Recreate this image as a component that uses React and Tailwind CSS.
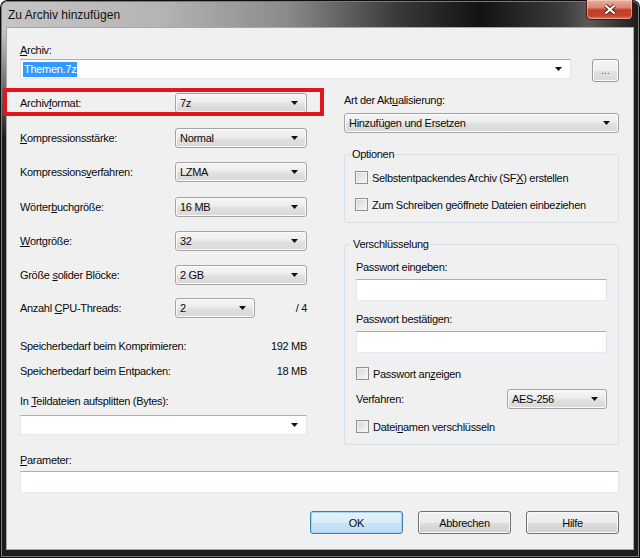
import React from "react";

function Arrow() {
  return (
    <svg width="7" height="4" viewBox="0 0 7 4" className="shrink-0">
      <path d="M0 0H7L3.5 4Z" fill="#111" />
    </svg>
  );
}

function Combo({ text, className = "" }) {
  return (
    <div
      className={
        "h-[20px] flex items-center rounded-[3px] border border-[#a4a4a4] bg-[linear-gradient(to_bottom,#f5f5f5_0%,#ececec_45%,#e0e0e0_55%,#d8d8d8_100%)] shadow-[inset_0_0_0_1px_#fbfbfb] pl-[4px] pr-[8px] " +
        className
      }
    >
      <span className="flex-1 whitespace-nowrap">{text}</span>
      <Arrow />
    </div>
  );
}

function Check({ children, className = "" }) {
  return (
    <div className={"flex items-center h-[13px] " + className}>
      <span className="w-[13px] h-[13px] shrink-0 border border-[#8e8f8f] bg-[linear-gradient(135deg,#d6d6d6_0%,#f8f8f8_100%)] shadow-[inset_0_0_0_1px_#f3f3f3]" />
      <span className="ml-[4px] whitespace-nowrap">{children}</span>
    </div>
  );
}

function TextBox({ className = "" }) {
  return (
    <div
      className={
        "h-[22px] bg-white border border-[#abadb3] border-l-[#e2e3ea] border-r-[#e2e3ea] border-b-[#e3e9ef] " +
        className
      }
    />
  );
}

function Row({ label, children, className = "" }) {
  return (
    <div className={"flex items-center h-[20px] " + className}>
      <span className="w-[155px] whitespace-nowrap">{label}</span>
      {children}
    </div>
  );
}

export default function App() {
  return (
    <div className="w-[640px] h-[558px] relative flex flex-col rounded-t-[7px] overflow-hidden bg-[linear-gradient(to_bottom,transparent_0px,transparent_30px,#1c1c1c_140px),linear-gradient(to_right,#c6c6c6_0%,#b4b4b4_25%,#8a8a8a_45%,#3a3a3a_62%,#121212_75%,#3c3c3c_88%,#5a5a5a_92%,#1a1a1a_100%)] shadow-[inset_0_0_0_1px_#0c0c0c,inset_0_0_0_2px_#7a7a7a] font-['Liberation_Sans',Arial,sans-serif] text-[11px] leading-[14px] tracking-[-0.3px] text-[#0a0a0a]">
      {/* title bar */}
      <div className="h-[28px] shrink-0 flex items-start">
        <div className="pl-[8px] pt-[8px] text-[12px] leading-[14px] tracking-normal text-[#111]">
          Zu Archiv hinzufügen
        </div>
        <div className="flex-1" />
        <div className="mr-[7px] w-[47px] h-[20px] flex items-center justify-center rounded-b-[5px] border border-t-0 border-[#4a1610] bg-[linear-gradient(to_bottom,#eab0a2_0%,#d98672_40%,#c2402a_52%,#c3432c_80%,#dc6e54_100%)] shadow-[inset_0_0_0_1px_rgba(255,220,210,0.5)]">
          <svg width="14" height="11" viewBox="0 0 14 11">
            <path d="M2.5 1.5L11.5 9.5M11.5 1.5L2.5 9.5" stroke="#4a1a12" strokeWidth="4" />
            <path d="M2.5 1.5L11.5 9.5M11.5 1.5L2.5 9.5" stroke="#ffffff" strokeWidth="2.2" />
          </svg>
        </div>
      </div>

      {/* client */}
      <div className="mx-[7px] h-[521px] shrink-0 bg-[#f0f0f0] shadow-[0_0_0_1px_#a8a8a8] px-[13px] pt-[15px] flex flex-col">
        <div className="h-[14px]">
          <u>A</u>rchiv:
        </div>
        <div className="mt-[2px] flex items-start">
          <div className="w-[551px] h-[20px] flex items-center bg-white border border-[#abadb3] border-l-[#e2e3ea] border-r-[#e2e3ea] border-b-[#e3e9ef] pl-[2px] pr-[8px]">
            <span className="bg-[#3399ff] text-white px-[1px] leading-[15px]">Themen.7z</span>
            <span className="flex-1" />
            <Arrow />
          </div>
          <div className="ml-[21px] w-[27px] h-[23px] flex items-center justify-center rounded-[3px] border border-[#9a9a9a] bg-[linear-gradient(to_bottom,#f6f6f6_0%,#eeeeee_50%,#e2e2e2_51%,#d9d9d9_100%)] shadow-[inset_0_0_0_1px_#fcfcfc] text-[10px] tracking-normal text-[#555]">
            ...
          </div>
        </div>

        {/* columns */}
        <div className="mt-[11px] flex items-start">
          {/* left */}
          <div className="w-[287px] flex flex-col">
            <Row label={<>Archiv<u>f</u>ormat:</>}>
              <Combo text="7z" className="w-[132px]" />
            </Row>
            <Row className="mt-[15px]" label={<><u>K</u>ompressionsstärke:</>}>
              <Combo text="Normal" className="w-[132px]" />
            </Row>
            <Row className="mt-[14px]" label={<>Kompressions<u>v</u>erfahren:</>}>
              <Combo text="LZMA" className="w-[132px]" />
            </Row>
            <Row className="mt-[15px]" label={<>Wörter<u>b</u>uchgröße:</>}>
              <Combo text="16 MB" className="w-[132px]" />
            </Row>
            <Row className="mt-[14px]" label={<><u>W</u>ortgröße:</>}>
              <Combo text="32" className="w-[132px]" />
            </Row>
            <Row className="mt-[14px]" label={<>Größe <u>s</u>olider Blöcke:</>}>
              <Combo text="2 GB" className="w-[132px]" />
            </Row>
            <Row className="mt-[13px]" label={<>Anzahl <u>C</u>PU-Threads:</>}>
              <Combo text="2" className="w-[80px]" />
              <span className="flex-1 text-right whitespace-nowrap">/ 4</span>
            </Row>
            <div className="mt-[21px] flex justify-between h-[14px]">
              <span>Speicherbedarf beim Komprimieren:</span>
              <span>192 MB</span>
            </div>
            <div className="mt-[11px] flex justify-between h-[14px]">
              <span>Speicherbedarf beim Entpacken:</span>
              <span>18 MB</span>
            </div>
            <div className="mt-[16px] h-[14px]">
              In <u>T</u>eildateien aufsplitten (Bytes):
            </div>
            <div className="mt-[7px] h-[20px] flex items-center justify-end bg-white border border-[#abadb3] border-l-[#e2e3ea] border-r-[#e2e3ea] border-b-[#e3e9ef] pr-[8px]">
              <Arrow />
            </div>
          </div>

          {/* right */}
          <div className="ml-[37px] w-[275px] flex flex-col">
            <div className="h-[14px] whitespace-nowrap">
              Art der Akt<u>u</u>alisierung:
            </div>
            <Combo text="Hinzufügen und Ersetzen" className="mt-[6px]" />

            <fieldset className="mt-[14px] border border-[#d5dfe5] rounded-[3px]">
              <legend className="ml-[5px] px-[2px] leading-[14px]">Optionen</legend>
              <div className="pl-[10px] pt-[10px] pb-[11px] flex flex-col">
                <Check>
                  Selbstentpackendes Archiv (SF<u>X</u>) erstellen
                </Check>
                <Check className="mt-[14px]">
                  Zum Schreiben <u>g</u>eöffnete Dateien einbeziehen
                </Check>
              </div>
            </fieldset>

            <fieldset className="mt-[14px] border border-[#d5dfe5] rounded-[3px]">
              <legend className="ml-[6px] px-[2px] leading-[14px]">Verschlüsselung</legend>
              <div className="pl-[11px] pr-[11px] pt-[9px] pb-[11px] flex flex-col">
                <div className="h-[14px]">Passwort eingeben:</div>
                <TextBox className="mt-[5px]" />
                <div className="mt-[11px] h-[14px]">Passwort bestätigen:</div>
                <TextBox className="mt-[5px]" />
                <Check className="mt-[14px]">
                  Passwort an<u>z</u>eigen
                </Check>
                <div className="mt-[9px] h-[20px] flex items-center justify-between">
                  <span>Verfahren:</span>
                  <Combo text="AES-256" className="w-[100px]" />
                </div>
                <Check className="mt-[11px]">
                  Datei<u>n</u>amen verschlüsseln
                </Check>
              </div>
            </fieldset>
          </div>
        </div>

        <div className="mt-[8px] h-[14px]">
          <u>P</u>arameter:
        </div>
        <TextBox className="mt-[4px] w-[599px]" />

        <div className="mt-[18px] flex justify-end gap-[15px] pr-[1px]">
          <div className="w-[93px] h-[23px] flex items-center justify-center rounded-[3px] border border-[#3c7fb1] bg-[linear-gradient(to_bottom,#e6f3fc_0%,#d8ecfa_50%,#c8e3f7_51%,#bddcf4_100%)] shadow-[inset_0_0_0_1px_#a7d4f3]">
            OK
          </div>
          <div className="w-[93px] h-[23px] flex items-center justify-center rounded-[3px] border border-[#707070] bg-[linear-gradient(to_bottom,#f2f2f2_0%,#ebebeb_50%,#dddddd_51%,#cfcfcf_100%)] shadow-[inset_0_0_0_1px_#fafafa]">
            Abbrechen
          </div>
          <div className="w-[93px] h-[23px] flex items-center justify-center rounded-[3px] border border-[#707070] bg-[linear-gradient(to_bottom,#f2f2f2_0%,#ebebeb_50%,#dddddd_51%,#cfcfcf_100%)] shadow-[inset_0_0_0_1px_#fafafa]">
            Hilfe
          </div>
        </div>
      </div>

      {/* red highlight */}
      <div className="absolute left-[3px] top-[88px] w-[321px] h-[28px] border-[4px] border-[#e3141c] pointer-events-none" />
    </div>
  );
}
